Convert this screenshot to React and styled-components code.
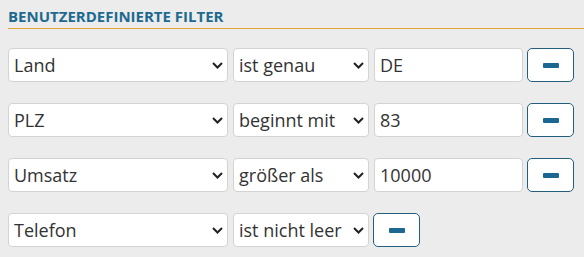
import React from "react";
import styled, { createGlobalStyle } from "styled-components";

const Global = createGlobalStyle`
  html, body {
    margin: 0;
    padding: 0;
    background: #ececec;
  }
  body {
    font-family: "Open Sans", "Noto Sans", sans-serif;
    color: #333;
  }
`;

const fields = ["Land", "PLZ", "Umsatz", "Telefon"];
const operators = ["ist genau", "beginnt mit", "größer als", "ist nicht leer"];

const filters = [
  { field: "Land", op: "ist genau", value: "DE" },
  { field: "PLZ", op: "beginnt mit", value: "83" },
  { field: "Umsatz", op: "größer als", value: "10000" },
  { field: "Telefon", op: "ist nicht leer", value: null },
];

const Chevron = () => (
  <svg width="11" height="7" viewBox="0 0 11 7">
    <path d="M1 1 L5.5 5.5 L10 1" fill="none" stroke="#222" strokeWidth="2" />
  </svg>
);

const Minus = () => (
  <svg width="16" height="5" viewBox="0 0 16 5">
    <rect x="0" y="0" width="16" height="5" rx="1" fill="#1b6792" />
  </svg>
);

const App = () => {
  return (
    <Panel>
      <Global />
      <Title>Benutzerdefinierte Filter</Title>
      <List>
        {filters.map((f) => (
          <Row key={f.field}>
            <SelectWrap $width={220}>
              <Select defaultValue={f.field}>
                {fields.map((x) => (
                  <option key={x}>{x}</option>
                ))}
              </Select>
              <Arrow>
                <Chevron />
              </Arrow>
            </SelectWrap>
            <SelectWrap $width={136}>
              <Select defaultValue={f.op}>
                {operators.map((x) => (
                  <option key={x}>{x}</option>
                ))}
              </Select>
              <Arrow>
                <Chevron />
              </Arrow>
            </SelectWrap>
            {f.value !== null && <Input type="text" defaultValue={f.value} />}
            <RemoveButton>
              <Minus />
            </RemoveButton>
          </Row>
        ))}
      </List>
    </Panel>
  );
};

const Panel = styled.div`
  width: 584px;
  height: 257px;
  box-sizing: border-box;
  padding: 7px 0 0 8px;
`;

const Title = styled.h2`
  margin: 0;
  padding-bottom: 3px;
  font-size: 15px;
  line-height: 18px;
  font-weight: 700;
  text-transform: uppercase;
  letter-spacing: 0;
  color: #1d6a90;
  border-bottom: 1px solid #e3a63a;
`;

const List = styled.div`
  display: flex;
  flex-direction: column;
  gap: 21px;
  padding-top: 19px;
`;

const Row = styled.div`
  display: flex;
  align-items: center;
  gap: 5px;
`;

const SelectWrap = styled.div`
  position: relative;
  width: ${(p) => p.$width}px;
  height: 34px;
`;

const Select = styled.select`
  appearance: none;
  width: 100%;
  height: 100%;
  box-sizing: border-box;
  margin: 0;
  padding: 0 18px 0 5px;
  border: 1px solid #d3d3d3;
  border-radius: 4px;
  background: #fff;
  font-family: "Open Sans", "Noto Sans", sans-serif;
  font-size: 18px;
  color: #333;
  outline: none;
`;

const Arrow = styled.span`
  position: absolute;
  right: 5px;
  top: 14px;
  display: flex;
  pointer-events: none;
`;

const Input = styled.input`
  width: 149px;
  height: 34px;
  box-sizing: border-box;
  margin: 0;
  padding: 0 5px;
  border: 1px solid #d3d3d3;
  border-radius: 4px;
  background: #fff;
  font-family: "Open Sans", "Noto Sans", sans-serif;
  font-size: 18px;
  color: #333;
  outline: none;
`;

const RemoveButton = styled.button`
  width: 47px;
  height: 34px;
  margin-left: -1px;
  padding: 0;
  display: flex;
  align-items: center;
  justify-content: center;
  box-sizing: border-box;
  border: 1px solid #235e7e;
  border-radius: 5px;
  background: #fff;
  cursor: pointer;
`;

export default App;
